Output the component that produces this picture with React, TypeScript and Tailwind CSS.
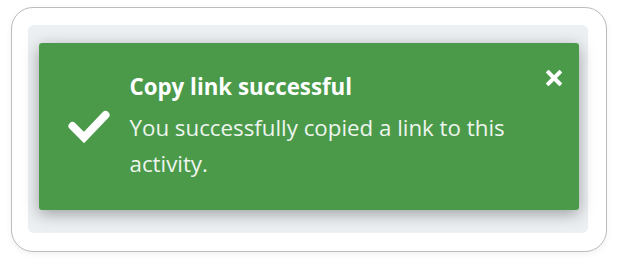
import React from "react";

export default function App() {
  return (
    <div className="w-[617px] h-[267px] bg-white pt-[7px] pl-[11px]">
      <div className="w-[596px] h-[245px] rounded-[22px] border-[1.5px] border-[#bcbcbc] bg-white pt-[16.5px] pl-[15.5px] shadow-[0_2px_6px_rgba(0,0,0,0.06)]">
        <div className="w-[560px] h-[208px] rounded-[6px] bg-[#edf0f3] pl-[11px] pt-[18px]">
          <div
            className="relative w-[540px] h-[167px] rounded-[3px] bg-[#4a9a4a] flex items-center shadow-[0_4px_16px_rgba(0,0,0,0.34)] text-white"
            style={{ fontFamily: '"Open Sans", "Noto Sans", sans-serif' }}
          >
            <div className="pl-[29px] pr-[20px] shrink-0">
              <svg width="42" height="33" viewBox="0 0 42 33" fill="none">
                <polyline
                  points="4.5,16 16,27.5 37.5,5"
                  stroke="white"
                  strokeWidth="8"
                  strokeLinecap="round"
                  strokeLinejoin="miter"
                />
              </svg>
            </div>
            <div className="text-[22.3px] leading-[36px] pb-[2px]">
              <div className="font-bold mb-[5px]">Copy link successful</div>
              <div className="w-[395px] text-[#eef5ee]">
                You successfully copied a link to this activity.
              </div>
            </div>
            <button className="absolute right-[17px] top-[27px] w-[16px] h-[16px]">
              <svg width="16" height="16" viewBox="0 0 16 16">
                <path d="M2.5 2.5 L13.5 13.5 M13.5 2.5 L2.5 13.5" stroke="white" strokeWidth="4" strokeLinecap="square" />
              </svg>
            </button>
          </div>
        </div>
      </div>
    </div>
  );
}
